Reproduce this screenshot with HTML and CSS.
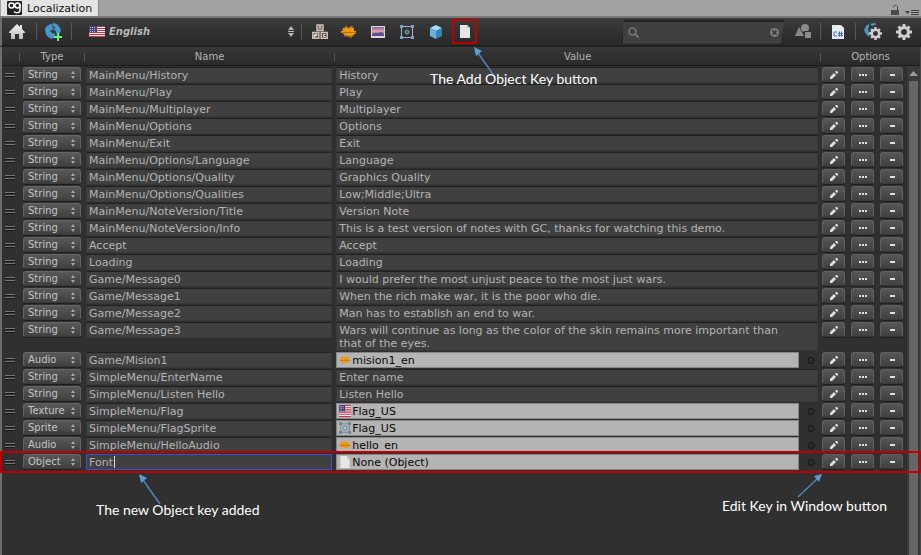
FILE: index.html
```html
<!DOCTYPE html>
<html lang="en">
<head>
<meta charset="utf-8">
<title>Localization</title>
<link rel="stylesheet" href="styles.css">
</head>
<body>
<svg class="symbols" aria-hidden="true">
  <linearGradient id="metal" x1="0" y1="0" x2="0" y2="1"><stop offset="0" stop-color="#f2f2f2"/><stop offset="1" stop-color="#bdbdbd"/></linearGradient>
  <linearGradient id="sunset" x1="0" y1="0" x2="0" y2="1"><stop offset="0" stop-color="#8a6a9c"/><stop offset=".5" stop-color="#e0a0a8"/><stop offset="1" stop-color="#4a4a90"/></linearGradient>
  <symbol id="home" viewBox="0 0 18 16"><path fill="url(#metal)" d="M9 0 1 8v1h2v6h4v-5h4v5h4V9h2V8l-3-3V1h-2v2z"/></symbol>
  <symbol id="globe" viewBox="0 0 18 18"><circle cx="8" cy="8" r="8" fill="#2c4350"/><path fill="#4a97c4" d="M0 6 2 3l4-2 2 1-1 2 2 1-2 2-2 1 2 2 3 1v3l-3 2-4-2-2-3zM8 0l4 1 3 4 1 3-2 3-3-1v-2l-2-1 1-3-2-1z"/><path fill="#6cf07c" d="M12 10h2v3h3v2h-3v3h-2v-3H9v-2h3z"/></symbol>
  <symbol id="flag" viewBox="0 0 16 11" preserveAspectRatio="none"><path fill="#f2f0f0" d="M0 0h16v11H0z"/><path stroke="#c8324a" d="M0 .5h16M0 2.5h16M0 4.500h16M0 6.500h16M0 8.500h16M0 10.500h16"/><path fill="#40407c" d="M0 0h8v6H0z"/><path stroke="#c8c8e0" stroke-dasharray="1 1" d="M1 1.500h6M1 3.500h6M1 5.500h6"/></symbol>
  <symbol id="blocks" viewBox="0 0 16 15"><g fill="#4c3f3b" stroke="#d3c0ba" stroke-width="1.500"><path d="M5 1h6v5.500H5zM.8 8.500h6v5.700h-6zM9.200 8.500h6v5.700h-6z"/></g><g fill="none" stroke="#f0e2dc"><path d="M7 5.500V3l1-1 1 1v2.500M3 13v-3h2v1.500H3 2v1.500zM13.500 10.500h-2v2h2"/></g></symbol>
  <symbol id="wave" viewBox="0 0 16 14"><path fill="#f09a14" d="M1 4h1l1-2 1 2 1-4 1 3 1-1 1 2 1-3 1 2 1-3 1 4 1-2v4h2v3h-2l-1 3-1-2-1 4-1-4-1 3-1-3-1 2-1-2-1 2-1-3H2V8H0V6h2z"/><path stroke="#b56a08" d="M1 7.500h14"/></symbol>
  <symbol id="picture" viewBox="0 0 14 12"><path fill="#dcd4de" d="M0 0h14v12H0z"/><path fill="url(#sunset)" d="M1 1h12v9H1z"/><path fill="#58508c" d="m1 8 3-1 3 0 3-1 3 2v2H1z"/></symbol>
  <symbol id="sprite" viewBox="0 0 14 14"><path fill="none" stroke="#9fb4c4" d="M2 1.500h10M2 12.500h10M1.500 2v10M12.500 2v10"/><g fill="#6fa4c6"><path d="M0 0h3v3H0zM11 0h3v3h-3zM0 11h3v3H0zM11 11h3v3h-3z"/></g><circle cx="7" cy="7" r="2" fill="none" stroke="#7eabc8"/><path fill="#b8d2e0" d="M6.500 6.500h1v1h-1z"/></symbol>
  <symbol id="sprite-asset" viewBox="0 0 12 12"><path fill="#a3abb0" stroke="#8797a2" d="M1.500 1.500h9v9h-9z"/><path fill="#648ba4" d="M0 0h3v3H0zM9 0h3v3H9zM0 9h3v3H0zM9 9h3v3H9z"/><circle cx="6" cy="6" r="2" fill="#a9c0cd" stroke="#6f92a8"/></symbol>
  <symbol id="cube" viewBox="0 0 14 14"><path fill="#a6dcf6" d="m7 0 6 3-6 3-6-3z"/><path fill="#62b4e0" d="m1 3 6 3v8l-6-3z"/><path fill="#3983b6" d="m13 3-6 3v8l6-3z"/></symbol>
  <symbol id="page" viewBox="0 0 12 13"><path fill="#e6e6e4" d="M1 0h7l3 3v10H1z"/><path fill="#c4c4c4" d="M8 0v3h3z"/></symbol>
  <symbol id="script" viewBox="0 0 12 14"><path fill="#e8ecf0" d="M0 0h9l3 3v11H0z"/><path fill="none" stroke="#3b6cc6" d="M5 7H2v4h3M7.500 6.500v5M9.500 6.500v5M6 8.500h5M6 10.500h5"/></symbol>
  <symbol id="shapes" viewBox="0 0 17 15"><g fill="#8b8b8b"><circle cx="10" cy="4" r="4"/><path d="m4 3 5 9H0z"/><path stroke="#303030" d="M9.500 7.500h7v7h-7z"/></g></symbol>
  <symbol id="gear" viewBox="0 0 16 16"><circle cx="8" cy="8" r="4.500" fill="none" stroke="#cfcfcf" stroke-width="3"/><g stroke="#cfcfcf" stroke-width="3"><path d="M8 0v3M8 13v3M0 8h3M13 8h3M2.500 2.500l2 2M11.500 11.500l2 2M2.500 13.500l2-2M11.500 4.500l2-2"/></g></symbol>
  <symbol id="globegear" viewBox="0 0 18 17"><path fill="#4a97c4" d="m2 3 3-2v3L4 6l1 3v5L2 11 0 7zM6 1l4-1 3 1-2 1-3 1z"/><svg x="5" y="4" width="13" height="13"><use href="#gear"/></svg></symbol>
  <symbol id="sort" viewBox="0 0 6 11"><path fill="currentColor" d="m3 0 3 4H0zM3 11 0 7h6zM0 5h6v1H0z"/></symbol>
  <symbol id="updown" viewBox="0 0 4 8"><path fill="#a8a8a8" d="m2 0 2 3H0zM2 8 0 5h4z"/></symbol>
  <symbol id="pencil" viewBox="0 0 8 8"><path fill="#e0e0e0" d="M0 8V6l4-4 2 2-4 4zM5 1l1-1h1l1 1v1L7 3z"/></symbol>
  <symbol id="dots" viewBox="0 0 8 8"><path fill="#dedede" d="M0 3h2v2H0zM3 3h2v2H3zM6 3h2v2H6z"/></symbol>
  <symbol id="minus" viewBox="0 0 8 8"><path fill="#dedede" d="M2 3h5v2H2z"/></symbol>
  <symbol id="target" viewBox="0 0 8 8"><circle cx="4" cy="4" r="3" fill="none" stroke="#111"/><path fill="#111" d="M3.500 3.500h1v1h-1z"/></symbol>
  <symbol id="arrow-left" viewBox="0 0 22 30"><path stroke="#4a86c4" stroke-width="1.500" d="M4 6l17 24"/><path fill="#5b9bd5" d="m0 0 8 4-6 5z"/></symbol>
  <symbol id="arrow-right" viewBox="0 0 25 24"><path stroke="#4a86c4" stroke-width="1.500" d="M1 23 20 5"/><path fill="#5b9bd5" d="m25 0-3 8-5-6z"/></symbol>
</svg>

<div class="window">
  <header class="tabs">
    <div class="tab">
      <svg class="logo" viewBox="0 0 15 14" aria-hidden="true"><rect width="15" height="14" rx="1" fill="#222"/><g fill="none" stroke="#fff" stroke-width="1.500"><circle cx="4.500" cy="4.500" r="2.500"/><circle cx="10.500" cy="4.500" r="2.500"/><path d="M13 3v6c0 3-4 3.500-6 1.500"/></g></svg>
      <span>Localization</span>
    </div>
    <svg class="lock" viewBox="0 0 8 10" aria-hidden="true"><path fill="#4b4b4b" d="M0 5h8v5H0z"/><path fill="none" stroke="#4b4b4b" d="M2.500 2.500v-1l1-1h2l1 1V5"/></svg>
    <svg class="menu" viewBox="0 0 14 6" aria-hidden="true"><path fill="#444" d="M0 1h5L2.500 4zM6 0h8v1H6zM6 2h8v1H6zM6 4h8v1H6z"/></svg>
  </header>

  <div class="toolbar">
    <button class="tool tool-home" aria-label="Home"><svg width="18" height="16"><use href="#home"/></svg></button>
    <i class="split"></i>
    <button class="tool tool-wide" aria-label="Add language"><svg width="18" height="18"><use href="#globe"/></svg></button>
    <i class="split"></i>
    <div class="language">
      <svg class="flag" width="16" height="11"><use href="#flag"/></svg>
      <select aria-label="Language"><option>English</option></select>
      <svg class="sort" width="6" height="11"><use href="#sort"/></svg>
    </div>
    <i class="split"></i>
    <div class="keys">
      <button class="tool" aria-label="Add string key"><svg width="16" height="15"><use href="#blocks"/></svg></button>
      <button class="tool" aria-label="Add audio key"><svg width="16" height="14"><use href="#wave"/></svg></button>
      <button class="tool" aria-label="Add texture key"><svg width="14" height="12"><use href="#picture"/></svg></button>
      <button class="tool" aria-label="Add sprite key"><svg width="14" height="14"><use href="#sprite"/></svg></button>
      <button class="tool" aria-label="Add prefab key"><svg width="14" height="14"><use href="#cube"/></svg></button>
      <div class="marked">
        <button class="tool" aria-label="Add object key"><svg width="12" height="13"><use href="#page"/></svg></button>
        <div class="callout callout-add"><svg width="22" height="30"><use href="#arrow-left"/></svg><span>The Add Object Key button</span></div>
      </div>
    </div>
    <div class="search">
      <svg width="11" height="11" viewBox="0 0 11 11" aria-hidden="true"><circle cx="4.500" cy="4.500" r="3.500" fill="none" stroke="#777" stroke-width="1.500"/><path stroke="#777" stroke-width="2" d="m7 7 3.500 3.500"/></svg>
      <input type="text" aria-label="Search">
      <button aria-label="Clear search"><svg width="9" height="9" viewBox="0 0 9 9"><circle cx="4.500" cy="4.500" r="4.500" fill="#7c7c7c"/><path stroke="#333" stroke-width="1.500" d="m2.500 2.500 4 4m0-4-4 4"/></svg></button>
    </div>
    <button class="tool tool-wide" aria-label="Filter types"><svg width="17" height="15"><use href="#shapes"/></svg></button>
    <i class="split"></i>
    <button class="tool tool-wide" aria-label="Generate script"><svg width="12" height="14"><use href="#script"/></svg></button>
    <i class="split"></i>
    <button class="tool tool-wide" aria-label="Language settings"><svg width="18" height="17"><use href="#globegear"/></svg></button>
    <button class="tool tool-edge" aria-label="Settings"><svg width="16" height="16"><use href="#gear"/></svg></button>
  </div>

  <main class="list">
    <table>
      <thead><tr><th></th><th>Type</th><th>Name</th><th>Value</th><th>Options</th></tr></thead>
      <tbody id="rows"></tbody>
    </table>
    <div class="scrollbar"><svg width="9" height="5" viewBox="0 0 9 5" aria-hidden="true"><path fill="#9a9a9a" d="m4.500 0 4.500 5H0z"/></svg><div class="thumb"></div></div>
  </main>
</div>
<script src="script.js"></script>
</body>
</html>
```
FILE: styles.css
```css
* { box-sizing: border-box; }
body { margin: 0; background: #303030; color: #b4b4b4; font: 11px/13px "DejaVu Sans", Verdana, sans-serif; }
button, input, select, textarea { margin: 0; padding: 0; border: 0; background: none; color: inherit; font: inherit; outline: 0; border-radius: 0; }
select { appearance: none; }
svg { display: block; flex: none; }
.symbols { position: absolute; width: 0; height: 0; }

.window { display: flex; flex-direction: column; min-height: 100vh; overflow: hidden; }
.tabs { display: flex; align-items: flex-end; height: 18px; background: #a2a2a2; border-bottom: 2px solid #7a7a7a; padding: 0 2px 0 1px; }
.tab { display: flex; align-items: center; gap: 5px; height: 16px; padding: 0 6px; background: #e4e4e4; border-right: 1px solid #888; color: #111; }
.logo { width: 15px; height: 14px; }
.lock { width: 8px; height: 10px; margin: 0 6px 1px auto; }
.menu { width: 14px; height: 6px; }

.toolbar { display: flex; align-items: center; height: 29px; padding: 0 3px 0 0; background: linear-gradient(#3b3b3b, #292929); border-left: 2px solid #6e6e6e; border-bottom: 2px solid #202020; }
.tool { display: flex; align-items: center; justify-content: center; width: 25px; height: 25px; }
.tool-wide { width: 32px; }
.tool-home { width: 29px; margin-right: 4px; }
.tool-edge { width: 29px; }
.split { flex: none; width: 1px; height: 17px; margin: 0 1px; background: #5a5a5a; }
.language { display: flex; align-items: center; flex: 0 1 227px; padding: 0 6px 0 16px; color: #b8b8b8; }
.language select { flex: 1; min-width: 0; height: 20px; padding-left: 4px; font-size: 10px; font-weight: bold; font-style: italic; }
.keys { display: flex; gap: 4px; padding-left: 4px; }
.marked { position: relative; }
.marked > .tool { border: 2px solid #c00000; }
.search { display: flex; align-items: center; width: 163px; height: 24px; margin: 0 3px 0 auto; padding: 0 5px; background: #404040; border-top: 2px solid #242424; border-left: 2px solid #242424; clip-path: polygon(2% 0, 100% 0, 98% 100%, 0 100%); }
.search input { flex: 1; min-width: 0; height: 18px; padding: 0 4px; }

.list { display: flex; flex: 1; border-left: 2px solid #6e6e6e; border-right: 1px solid #484848; background: linear-gradient(#383838, #2a2a2a 18px, #1e1e1e 18px, #1e1e1e 19px, #303030 19px); }
table { display: block; flex: 1; min-width: 0; }
thead, tbody { display: block; }
tr { display: grid; grid-template-columns: 19px 63px 34fr 66fr 87px; position: relative; }
thead tr { grid-template-columns: 17px 65px 34fr 66fr 100px; width: calc(100% + 13px); height: 20px; align-items: center; }
th { height: 8px; padding: 0; line-height: 8px; font-size: 10px; font-weight: normal; border-left: 1px solid #555; }
th:first-child { border: 0; }
tbody tr { padding-bottom: 1px; }
td { padding: 0 2px; min-width: 0; }

.grip { width: 10px; height: 4px; margin: 6px 0 0 1px; border-top: 1px solid #777; border-bottom: 1px solid #777; box-shadow: 0 1px #191919, inset 0 1px #191919; }
.type { display: flex; align-items: center; position: relative; width: 58px; height: 15px; border: 1px solid #656565; border-bottom-color: #3a3a3a; border-radius: 3px; background: linear-gradient(#585858, #404040); box-shadow: 0 1px #202020; }
.type select { width: 100%; height: 13px; padding-left: 4px; font-size: 10px; line-height: 13px; color: #c4c4c4; }
.type svg { position: absolute; right: 5px; pointer-events: none; }

.field { display: block; width: 100%; height: 16px; padding: 1px 2px 0; background: #404040; border: 1px solid #383838; border-top-color: #202020; }
textarea.field { height: 29px; padding-right: 20px; resize: none; overflow: hidden; }
.selected .name { border: 1px solid #3a50c8; }
.object { display: flex; align-items: center; gap: 8px; }
.object .picker { width: 8px; height: 15px; margin-right: 3px; }
.asset { display: flex; align-items: center; flex: 1; gap: 1px; height: 16px; padding: 0 2px; background: #b4b4b4; border: 1px solid #858585; color: #080808; }
.name-edit { position: relative; }
.caret { position: absolute; top: 2px; left: 28px; width: 1px; height: 12px; background: #ddd; }

.options { display: flex; gap: 6px; }
.options button { display: flex; align-items: center; justify-content: center; width: 23px; height: 15px; border: 1px solid #606060; border-bottom-color: #383838; border-radius: 3px; background: linear-gradient(#565656, #404040); box-shadow: 0 1px #202020; }

.scrollbar { display: flex; flex-direction: column; align-items: center; width: 13px; margin-top: 19px; padding-top: 5px; background: #393939; }
.thumb { flex: 1; width: 9px; margin-top: 5px; background: #666; }

.selected::after { content: ""; position: absolute; inset: -3px -14px -2px -2px; border: 2px solid #c00000; pointer-events: none; }
.callout { position: absolute; z-index: 2; color: #fff; font: 14px/17px Lato, Calibri, sans-serif; white-space: nowrap; pointer-events: none; }
.callout-add { top: 28px; left: -22px; }
.callout-add svg { margin: 0 0 -7px 44px; }
.callout-name { top: 20px; left: 10px; }
.callout-name svg { margin: 0 0 -3px 43px; }
.callout-edit { top: 20px; right: 20px; }
.callout-edit svg { margin: 0 0 -1px 75px; }
```
FILE: script.js
```js
const entries = [
  ["String", "MainMenu/History", "History"],
  ["String", "MainMenu/Play", "Play"],
  ["String", "MainMenu/Multiplayer", "Multiplayer"],
  ["String", "MainMenu/Options", "Options"],
  ["String", "MainMenu/Exit", "Exit"],
  ["String", "MainMenu/Options/Language", "Language"],
  ["String", "MainMenu/Options/Quality", "Graphics Quality"],
  ["String", "MainMenu/Options/Qualities", "Low;Middle;Ultra"],
  ["String", "MainMenu/NoteVersion/Title", "Version Note"],
  ["String", "MainMenu/NoteVersion/Info", "This is a test version of notes with GC, thanks for watching this demo."],
  ["String", "Accept", "Accept"],
  ["String", "Loading", "Loading"],
  ["String", "Game/Message0", "I would prefer the most unjust peace to the most just wars."],
  ["String", "Game/Message1", "When the rich make war, it is the poor who die."],
  ["String", "Game/Message2", "Man has to establish an end to war."],
  ["String", "Game/Message3", "Wars will continue as long as the color of the skin remains more important than that of the eyes."],
  ["Audio", "Game/Mision1", "mision1_en", "wave"],
  ["String", "SimpleMenu/EnterName", "Enter name"],
  ["String", "SimpleMenu/Listen Hello", "Listen Hello"],
  ["Texture", "SimpleMenu/Flag", "Flag_US", "flag"],
  ["Sprite", "SimpleMenu/FlagSprite", "Flag_US", "sprite-asset"],
  ["Audio", "SimpleMenu/HelloAudio", "hello_en", "wave"],
  ["Object", "Font", "None (Object)", "page"]
];

const icon = (id, w, h) => `<svg width="${w}" height="${h}"><use href="#${id}"/></svg>`;

function valueCell(name, value, asset) {
  if (asset) {
    return `<div class="object"><button class="asset">${icon(asset, 12, asset === "wave" ? 10 : 12)}<span>${value}</span></button>
      <button class="picker" aria-label="Pick asset">${icon("target", 8, 15)}</button></div>`;
  }
  if (value.length > 80) {
    return `<textarea class="field" aria-label="Value of ${name}">${value}</textarea>`;
  }
  return `<input class="field" type="text" aria-label="Value of ${name}" value="${value}">`;
}

document.getElementById("rows").innerHTML = entries.map(([type, name, value, asset], i) => {
  const selected = i === entries.length - 1;
  return `<tr class="${selected ? "selected" : ""}">
    <td><div class="grip"></div></td>
    <td><div class="type"><select aria-label="Type of ${name}"><option>${type}</option></select>${icon("updown", 4, 8)}</div></td>
    <td><div class="name-edit"><input class="field name" type="text" aria-label="Key name" value="${name}">${selected ? `<i class="caret"></i><div class="callout callout-name">${icon("arrow-left", 22, 30)}<span>The new Object key added</span></div>` : ""}</div></td>
    <td>${valueCell(name, value, asset)}</td>
    <td><div class="options"><button aria-label="Edit key in window">${icon("pencil", 8, 8)}</button><button aria-label="More">${icon("dots", 8, 8)}</button><button aria-label="Remove">${icon("minus", 8, 8)}</button></div>
      ${selected ? `<div class="callout callout-edit">${icon("arrow-right", 25, 24)}<span>Edit Key in Window button</span></div>` : ""}</td>
  </tr>`;
}).join("");
```
